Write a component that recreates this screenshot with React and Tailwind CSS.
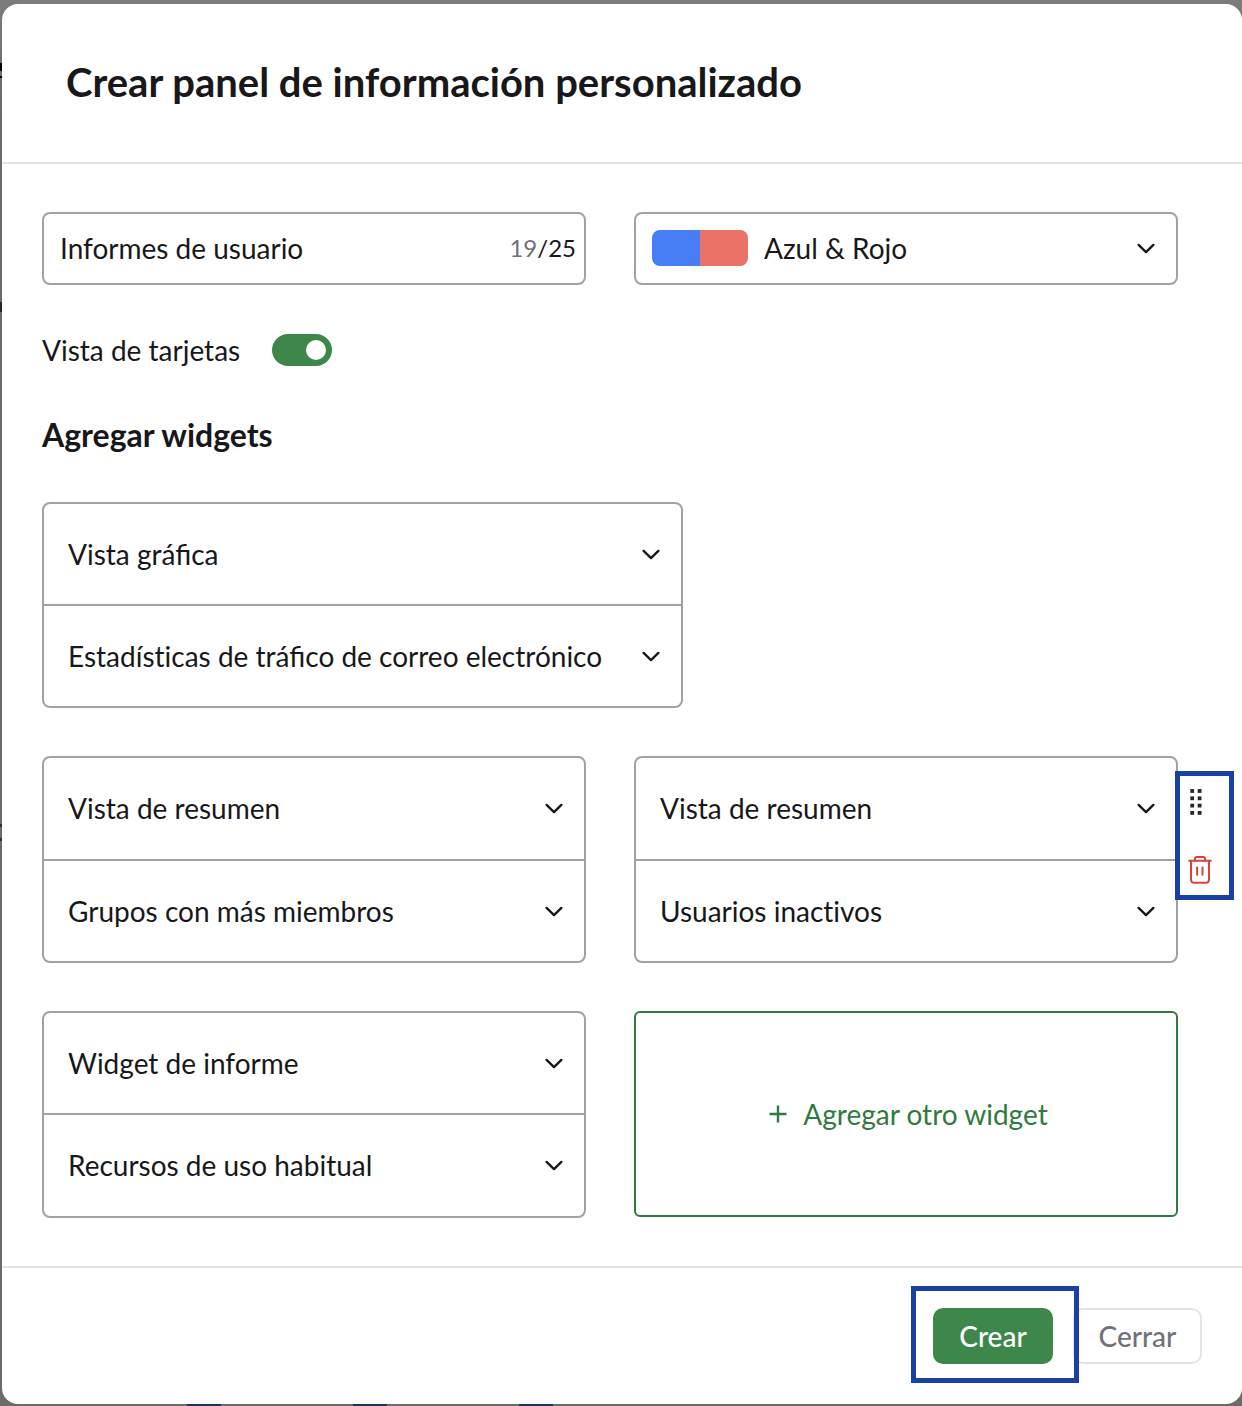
import { useState } from 'react';

const ChevronIcon = () => (
    <svg width="20" height="12" viewBox="0 0 20 12" fill="none" className="shrink-0">
        <path
            d="M2.6 2.9 10 10.100l7.400-7.200"
            stroke="#18181b"
            strokeWidth="2.4"
            strokeLinecap="round"
            strokeLinejoin="round"
        />
    </svg>
);

const DragIcon = () => (
    <svg width="12" height="27" viewBox="0 0 12 27" fill="#27272a">
        {[0.1, 7.4, 14.7, 22].map((y) => (
            <g key={y}>
                <rect x="0.3" y={y} width="3.8" height="3.8" />
                <rect x="7.7" y={y} width="3.8" height="3.8" />
            </g>
        ))}
    </svg>
);

const TrashIcon = () => (
    <svg
        width="24"
        height="28"
        viewBox="0 0 24 28"
        fill="none"
        stroke="#d3423b"
        strokeWidth="2"
        strokeLinecap="round"
    >
        <path d="M1.2 4.8h21.6" />
        <path d="M6.900 4.800V3.400C6.900 2 7.700 1 9.100 1h5.800c1.400 0 2.200 1 2.200 2.400v1.400" />
        <path d="M3 4.800v18.400C3 25.500 4.300 26.800 6.500 26.800h11c2.200 0 3.500-1.300 3.500-3.600V4.800" />
        <path d="M9.100 11.400v7.400M14.500 11.400v7.400" />
    </svg>
);

// Lato joins "ti" into one glyph, so it's switched off for the words that have it
const Label = ({ text }) => (
    <span>
        {text.split(/(\S*ti\S*)/).map((part, index) => (
            <span key={index} className={part.includes('ti') ? '[font-variant-ligatures:none]' : ''}>
                {part}
            </span>
        ))}
    </span>
);

const WidgetCard = ({ rows, className, firstRow = 'flex-1' }) => (
    <div
        className={`${className} flex flex-col rounded-lg border-2 border-[#a1a1aa] divide-y-2 divide-[#a1a1aa]`}
    >
        {rows.map((row, index) => (
            <button
                key={row}
                className={`${index === 0 ? firstRow : 'flex-1'} flex items-center justify-between pl-6 pr-5 text-left`}
            >
                <Label text={row} />
                <ChevronIcon />
            </button>
        ))}
    </div>
);

// Page content that peeks out around the dialog
const Backdrop = () => (
    <>
        <div className="absolute left-0 top-[63px] h-2 w-0.5 bg-black" />
        <div className="absolute left-0 top-[76px] h-0.5 w-0.5 bg-black" />
        <div className="absolute left-0 top-[302px] h-2.5 w-0.5 bg-[#27272a]" />
        <div className="absolute left-0 top-[824px] h-[3px] w-0.5 bg-[#333333]" />
        <div className="absolute left-0 top-[838px] h-[3px] w-0.5 bg-[#333333]" />
        <div className="absolute bottom-0 left-[187px] h-0.5 w-[34px] bg-[#1c3166]" />
        <div className="absolute bottom-0 left-[353px] h-0.5 w-[34px] bg-[#1c3166]" />
        <div className="absolute bottom-0 left-[519px] h-0.5 w-[34px] bg-[#1c3166]" />
    </>
);

const App = () => {
    const [name, setName] = useState('Informes de usuario');
    const [cardView, setCardView] = useState(true);

    return (
        <div className="relative h-[1406px] w-[1242px] overflow-hidden bg-[#6b6b6b] bg-linear-to-b from-[#7c7c7c] from-0% to-[#6b6b6b] to-8% pl-0.5 pt-1 font-['Lato',sans-serif] text-[28px] leading-9 text-[#18181b]">
            <Backdrop />
            <div className="relative flex h-[1400px] w-[1240px] flex-col rounded-2xl bg-white">
                <header className="h-40 border-b-2 border-[#e4e4e7] px-16 pt-[54px]">
                    <h1 className="text-[40px] font-bold leading-[48px]">
                        Crear panel de información personalizado
                    </h1>
                </header>

                <main className="h-[1102px] px-10 pt-12">
                    <div className="flex gap-12">
                        <label className="flex h-[73px] w-[544px] items-center rounded-lg border-2 border-[#a1a1aa] pb-px pl-4 pr-2">
                            <input
                                value={name}
                                maxLength={25}
                                onChange={(e) => setName(e.target.value)}
                                className="min-w-0 flex-1 outline-none"
                            />
                            <span className="text-[24px]">
                                <span className="text-[#71717a]">{name.length}</span>/25
                            </span>
                        </label>
                        <button className="flex h-[73px] w-[544px] items-center rounded-lg border-2 border-[#a1a1aa] pb-px pl-4 pr-5">
                            <span className="mr-4 flex h-9 w-24 overflow-hidden rounded-lg">
                                <span className="w-1/2 bg-[#477ef6]" />
                                <span className="w-1/2 bg-[#ea7267]" />
                            </span>
                            <span className="flex-1 text-left">Azul &amp; Rojo</span>
                            <ChevronIcon />
                        </button>
                    </div>

                    <div className="mt-[49px] flex h-8 items-center">
                        <span className="w-[230px]">Vista de tarjetas</span>
                        <button
                            role="switch"
                            aria-checked={cardView}
                            onClick={() => setCardView(!cardView)}
                            className={`flex h-8 w-[60px] items-center rounded-full px-1.5 ${cardView ? 'justify-end bg-[#3d874a]' : 'bg-gray-400'}`}
                        >
                            <span className="size-5 rounded-full bg-white" />
                        </button>
                    </div>

                    <h2 className="mt-[49px] text-[32px] font-bold leading-10">Agregar widgets</h2>

                    <WidgetCard
                        className="mt-[47px] h-[206px] w-[640.5px]"
                        rows={['Vista gráfica', 'Estadísticas de tráfico de correo electrónico']}
                    />

                    <div className="mt-12 flex gap-12">
                        <WidgetCard
                            className="h-[207px] w-[544px]"
                            rows={['Vista de resumen', 'Grupos con más miembros']}
                        />
                        <div className="relative">
                            <WidgetCard
                                className="h-[207px] w-[544px]"
                                rows={['Vista de resumen', 'Usuarios inactivos']}
                            />
                            <div className="absolute left-[541px] top-[15px] flex h-[129px] w-[59px] flex-col items-start border-[5px] border-[#1a3fa5] bg-white pl-2 pt-[13px]">
                                <button className="ml-0.5">
                                    <DragIcon />
                                </button>
                                <button className="mt-10">
                                    <TrashIcon />
                                </button>
                            </div>
                        </div>
                    </div>

                    <div className="mt-12 flex gap-12">
                        <WidgetCard
                            className="h-[207px] w-[544px]"
                            firstRow="h-[101.5px]"
                            rows={['Widget de informe', 'Recursos de uso habitual']}
                        />
                        <button className="flex h-[206px] w-[544px] items-center justify-center gap-4 rounded-md border-2 border-[#307a3e] pl-[5px] text-[#307a3e]">
                            <svg width="18" height="18" viewBox="0 0 18 18" fill="none">
                                <path d="M9 .5v17M.5 9h17" stroke="currentColor" strokeWidth="2.4" />
                            </svg>
                            <span>Agregar otro widget</span>
                        </button>
                    </div>
                </main>

                <footer className="flex flex-1 justify-end gap-5 border-t-2 border-[#e4e4e7] pr-10 pt-10">
                    <div className="relative">
                        <button className="h-14 w-[120px] rounded-[10px] bg-[#3d874a] font-medium text-white">
                            Crear
                        </button>
                        <div className="pointer-events-none absolute -left-[22px] -top-[22px] z-10 h-[97px] w-[168px] border-[5px] border-[#1a3fa5]" />
                    </div>
                    <button className="h-14 w-[129px] rounded-[10px] border-2 border-[#e4e4e7] font-medium text-[#71717a]">
                        Cerrar
                    </button>
                </footer>
            </div>
        </div>
    );
};

export default App;
